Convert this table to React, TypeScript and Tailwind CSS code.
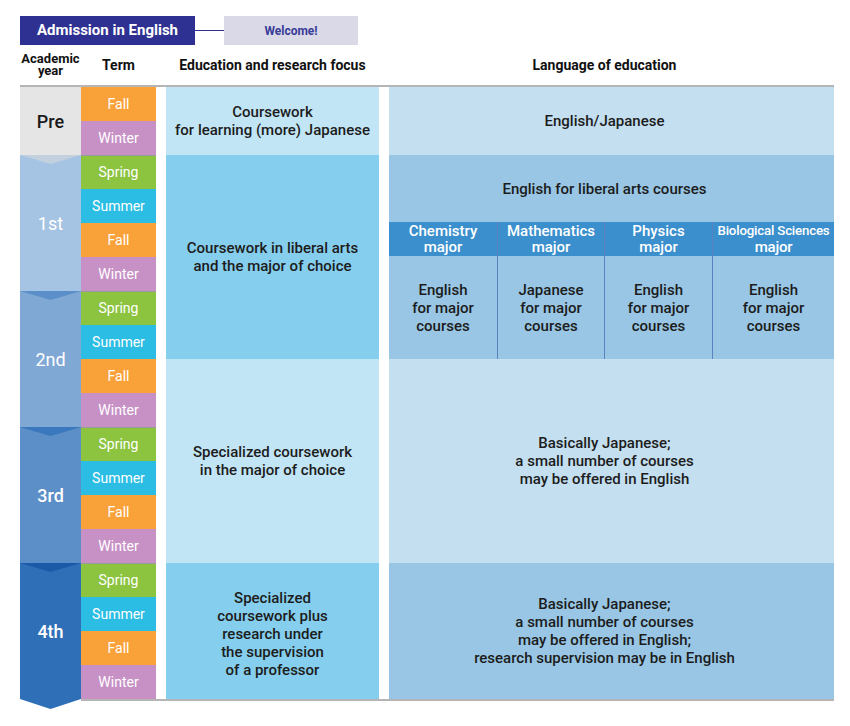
import React from "react";

type Term = "Spring" | "Summer" | "Fall" | "Winter";

const TERM_BG: Record<Term, string> = {
  Spring: "bg-[#8cc43f]",
  Summer: "bg-[#2bbde3]",
  Fall: "bg-[#f9a23a]",
  Winter: "bg-[#c791c6]",
};

const YEARS = [
  { label: "Pre", bg: "bg-[#e5e5e5]", text: "text-[#1a1a1a] font-medium", notch: null, terms: ["Fall", "Winter"] as Term[] },
  { label: "1st", bg: "bg-[#a5c3e3]", text: "text-white font-normal", notch: "#c3d0de", terms: ["Spring", "Summer", "Fall", "Winter"] as Term[] },
  { label: "2nd", bg: "bg-[#80a8d4]", text: "text-white font-normal", notch: "#5a8fc9", terms: ["Spring", "Summer", "Fall", "Winter"] as Term[] },
  { label: "3rd", bg: "bg-[#5c8ec7]", text: "text-white font-medium", notch: "#3a77bc", terms: ["Spring", "Summer", "Fall", "Winter"] as Term[] },
  { label: "4th", bg: "bg-[#2f6fb7]", text: "text-white font-medium", notch: "#1a5aa8", terms: ["Spring", "Summer", "Fall", "Winter"] as Term[] },
];

const MAJORS = [
  { name: "Chemistry", lang: "English", w: "w-[108px]", small: false },
  { name: "Mathematics", lang: "Japanese", w: "w-[107px]", small: false },
  { name: "Physics", lang: "English", w: "w-[108px]", small: false },
  { name: "Biological Sciences", lang: "English", w: "flex-1", small: true },
];

function YearBlock({ year, last }: { year: (typeof YEARS)[number]; last: boolean }) {
  const h = year.terms.length * 34;
  return (
    <div className={`relative flex items-center justify-center ${year.bg}`} style={{ height: h }}>
      {year.notch && (
        <svg className="absolute left-0 top-0" width="61" height="9" viewBox="0 0 61 9">
          <polygon points="0,0 61,0 30.5,9" fill={year.notch} />
        </svg>
      )}
      <span className={`text-[18px] ${year.text}`}>{year.label}</span>
      {last && (
        <svg className="absolute left-0 top-full" width="61" height="10" viewBox="0 0 61 10">
          <polygon points="0,0 61,0 30.5,10" fill="#2f6fb7" />
        </svg>
      )}
    </div>
  );
}

function Cell({ className, children }: { className: string; children: React.ReactNode }) {
  return (
    <div className={`flex items-center justify-center text-center leading-[18px] ${className}`}>
      <div>{children}</div>
    </div>
  );
}

export default function App() {
  return (
    <div className="w-[850px] h-[726px] bg-white pl-5 text-[15px] font-medium text-[#1c1c1c] font-['Roboto','Liberation_Sans',sans-serif]">
      {/* Title row */}
      <div className="flex items-center pt-4">
        <div className="w-[175px] h-[29px] flex items-center justify-center bg-[#2e3192] text-white text-[15px] font-bold">
          Admission in English
        </div>
        <div className="w-[29px] h-px bg-[#2e3192]" />
        <div className="w-[134px] h-[29px] flex items-center justify-center bg-[#d9d9e8] text-[#3a3c97] text-[12px] font-bold">
          Welcome!
        </div>
      </div>

      {/* Column headers */}
      <div className="flex items-center h-[40px] font-bold text-[14px] text-[#111]">
        <div className="w-[61px] flex flex-col items-center leading-[12px] text-[13px] whitespace-nowrap">
          <span>Academic</span>
          <span>year</span>
        </div>
        <div className="w-[75px] text-center">Term</div>
        <div className="w-[10px]" />
        <div className="w-[213px] text-center">Education and research focus</div>
        <div className="w-[10px]" />
        <div className="w-[445px] pr-[14px] text-center">Language of education</div>
      </div>

      <div className="w-[814px] h-[2px] bg-[#b5b5b5]" />

      {/* Body */}
      <div className="flex">
        <div className="w-[61px] flex flex-col">
          {YEARS.map((y, i) => (
            <YearBlock key={y.label} year={y} last={i === YEARS.length - 1} />
          ))}
        </div>

        <div className="w-[75px] flex flex-col">
          {YEARS.map((y, yi) =>
            y.terms.map((t, ti) => (
              <div
                key={`${y.label}-${t}`}
                className={`h-[34px] flex items-center justify-center text-white text-[14px] font-normal ${TERM_BG[t]} ${
                  ti === 0 && yi > 0 ? "border-t border-[#9a9a9a]" : ""
                }`}
              >
                {t}
              </div>
            ))
          )}
        </div>

        <div className="w-[10px]" />

        <div className="w-[213px] flex flex-col">
          <Cell className="h-[68px] bg-[#c2e5f6]">
            Coursework
            <br />
            for learning (more) Japanese
          </Cell>
          <Cell className="h-[204px] bg-[#86ceed]">
            Coursework in liberal arts
            <br />
            and the major of choice
          </Cell>
          <Cell className="h-[204px] bg-[#c2e5f6]">
            Specialized coursework
            <br />
            in the major of choice
          </Cell>
          <Cell className="h-[136px] bg-[#86ceed] pt-[5px]">
            Specialized
            <br />
            coursework plus
            <br />
            research under
            <br />
            the supervision
            <br />
            of a professor
          </Cell>
        </div>

        <div className="w-[10px]" />

        <div className="w-[445px] flex flex-col">
          <Cell className="h-[68px] bg-[#c4dff0] pr-[14px]">English/Japanese</Cell>
          <div className="h-[204px] flex flex-col bg-[#98c6e4]">
            <Cell className="h-[67px] pr-[14px]">English for liberal arts courses</Cell>
            <div className="h-[34px] flex bg-[#3b8fcc] text-white leading-[16px]">
              {MAJORS.map((m, i) => (
                <div
                  key={m.name}
                  className={`${m.w} flex flex-col items-center justify-center text-center ${
                    i > 0 ? "border-l border-[#5b82c0]" : ""
                  } ${m.small ? "text-[13.3px] tracking-[-0.2px]" : "text-[15px]"}`}
                >
                  <span>{m.name}</span>
                  <span className="text-[15px]">major</span>
                </div>
              ))}
            </div>
            <div className="flex-1 flex">
              {MAJORS.map((m, i) => (
                <div
                  key={m.name}
                  className={`${m.w} flex items-center justify-center text-center ${
                    i > 0 ? "border-l border-[#5b82c0]" : ""
                  }`}
                >
                  <div className="leading-[18px]">
                    {m.lang}
                    <br />
                    for major
                    <br />
                    courses
                  </div>
                </div>
              ))}
            </div>
          </div>
          <Cell className="h-[204px] bg-[#c4dff0] pr-[14px]">
            Basically Japanese;
            <br />
            a small number of courses
            <br />
            may be offered in English
          </Cell>
          <Cell className="h-[136px] bg-[#98c6e4] pr-[14px]">
            Basically Japanese;
            <br />
            a small number of courses
            <br />
            may be offered in English;
            <br />
            research supervision may be in English
          </Cell>
        </div>
      </div>

      <div className="ml-[61px] w-[753px] h-[2px] bg-[#b5b5b5]" />
    </div>
  );
}
